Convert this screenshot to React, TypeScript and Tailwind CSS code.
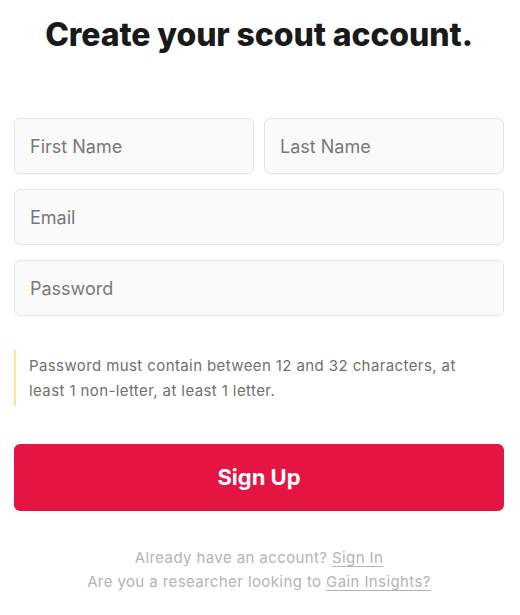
import React from 'react';

const Field = ({ placeholder, type = 'text' }: { placeholder: string; type?: string }) => (
  <input
    type={type}
    placeholder={placeholder}
    className="h-[56px] w-full min-w-0 rounded-[6px] border border-[#e4e4e4] bg-[#fafafa] px-[15px] text-[18px] text-[#222] placeholder:text-[#787878] outline-none"
  />
);

export default function App() {
  return (
    <div className="min-h-[615px] w-[520px] bg-white font-['Inter','Liberation_Sans',sans-serif]">
      <div className="flex flex-col pl-[14px] pr-[16px] pt-[13px]">
        <h1 className="text-center text-[32px] font-extrabold leading-[44px] tracking-[-0.1px] text-[#1a1a1a]">
          Create your scout account.
        </h1>

        <div className="mt-[61px] flex flex-col gap-[15px]">
          <div className="flex gap-[10px]">
            <Field placeholder="First Name" />
            <Field placeholder="Last Name" />
          </div>
          <Field placeholder="Email" type="email" />
          <Field placeholder="Password" type="password" />
        </div>

        <div className="mt-[34px] border-l-[2px] border-[#fde49a] py-[3px] pl-[13px] pr-[20px] text-[15px] leading-[25px] tracking-[0.4px] text-[#707070]">
          Password must contain between 12 and 32 characters, at least 1 non-letter, at least 1 letter.
        </div>

        <button className="mt-[38px] h-[67px] w-full rounded-[6px] bg-[#e41543] text-[22px] font-bold text-white">
          Sign Up
        </button>

        <div className="mt-[35px] flex flex-col items-center text-[15px] leading-[24px] tracking-[0.4px] text-[#b4b4b4]">
          <p>
            Already have an account? <a className="underline underline-offset-[3px]">Sign In</a>
          </p>
          <p>
            Are you a researcher looking to <a className="underline underline-offset-[3px]">Gain Insights?</a>
          </p>
        </div>
      </div>
    </div>
  );
}
